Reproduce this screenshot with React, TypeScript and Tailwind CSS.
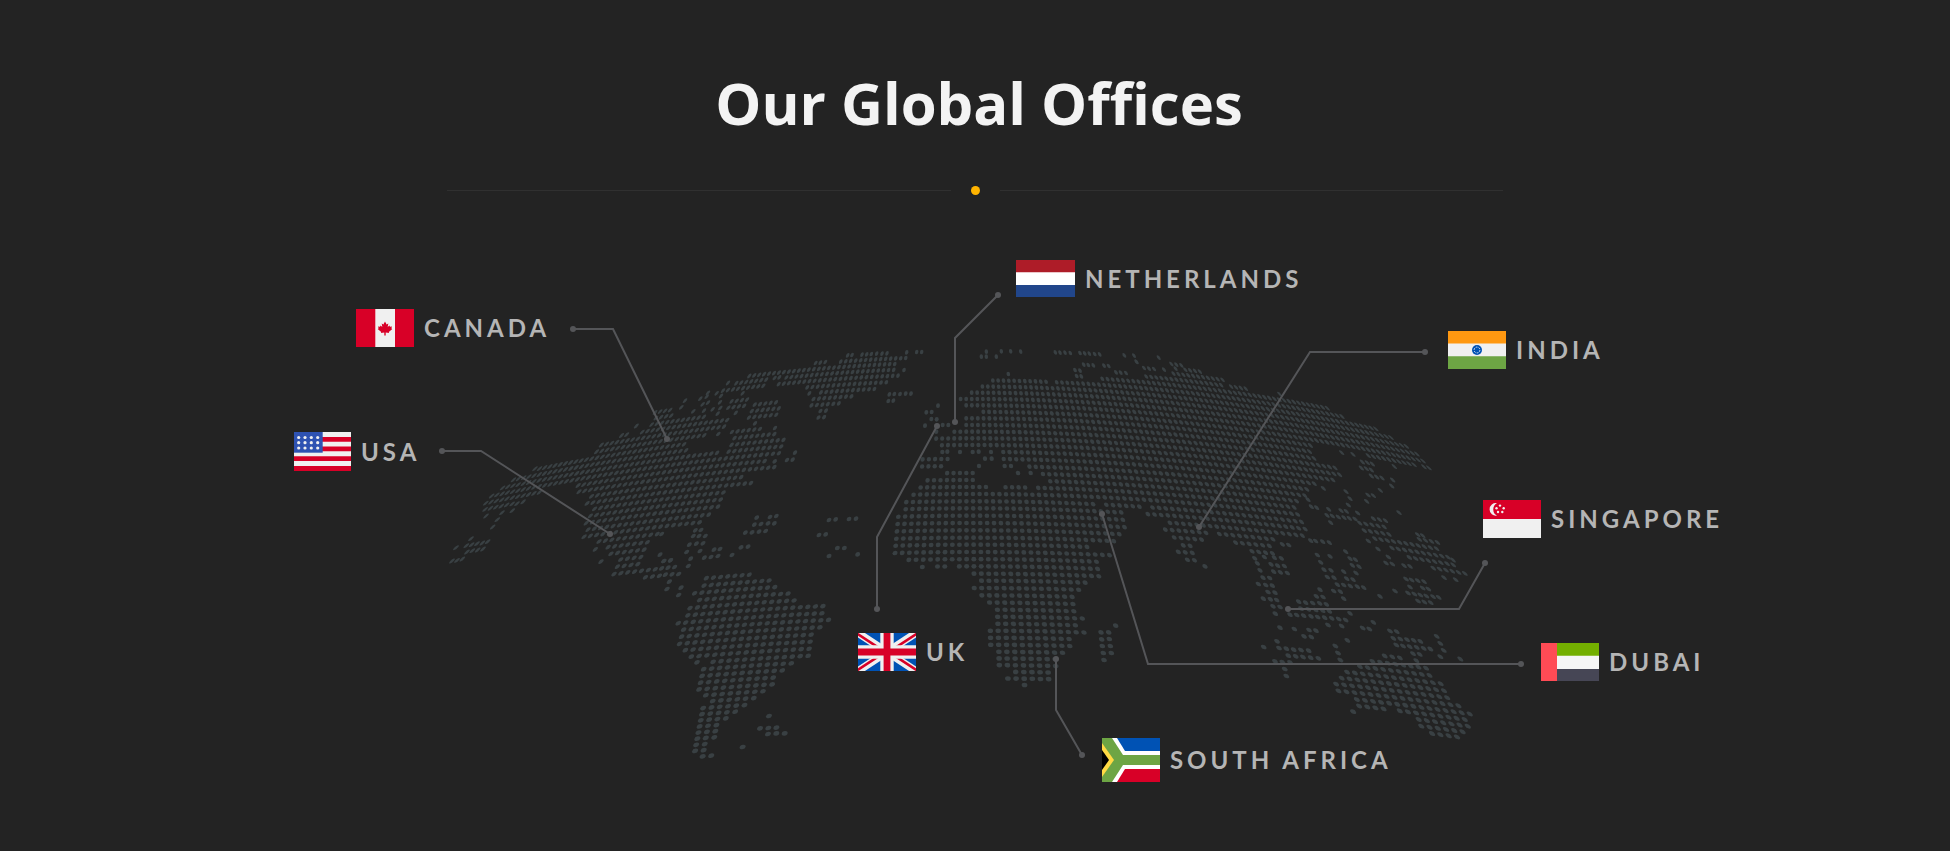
import React from "react";

type Region = { origin: [number, number]; outlines: number[][]; islands: number[] };

// Land outlines and single dots, in thirds of a map unit from each region's origin.
const REGIONS: Region[] = [
  {
    // Alaska, western Canada, Mexico
    origin: [430, 340],
    outlines: [
      [155, 490, 190, 458, 222, 432, 280, 404, 340, 372, 490, 346, 498, 328, 530, 300, 570, 300, 574, 276, 600, 276, 612, 288, 640, 264, 662, 262, 664, 240, 685, 203, 712, 200, 730, 215, 715, 250, 730, 300, 730, 560, 700, 565, 710, 585, 655, 605, 640, 650, 628, 685, 740, 672, 750, 707, 640, 716, 640, 700, 545, 707, 555, 685, 560, 665, 565, 645, 545, 650, 528, 630, 530, 612, 505, 612, 500, 600, 458, 597, 468, 572, 443, 558, 475, 535, 490, 510, 463, 494, 480, 472, 437, 462, 433, 428, 370, 440, 320, 468, 260, 497, 160, 514],
    ],
    islands: [315, 386, 123, 596, 109, 617, 125, 614, 141, 611, 157, 609, 173, 605, 111, 636, 127, 632, 143, 630, 159, 627, 78, 623, 66, 663, 81, 661, 97, 657, 168, 528, 188, 561, 202, 539, 216, 518, 247, 512, 261, 491, 619, 258, 765, 182, 754, 202, 690, 644, 702, 663, 722, 661, 513, 665, 496, 628],
  },
  {
    // Eastern Canada, USA, Greenland, South America
    origin: [660, 340],
    outlines: [
      [-25, 205, 10, 200, 45, 240, 70, 232, 215, 228, 212, 250, 200, 268, 135, 280, 130, 294, 90, 300, 85, 318, 78, 336, 20, 350, 100, 340, 172, 334, 180, 356, 200, 368, 300, 358, 345, 374, 345, 390, 275, 400, 245, 418, 275, 425, 270, 438, 195, 448, 190, 480, 175, 510, 145, 532, 118, 556, 5, 575, -30, 560],
      [215, 272, 280, 262, 340, 270, 350, 275, 372, 296, 355, 345, 340, 352, 300, 372, 200, 384, 195, 352, 205, 312],
      [255, 237, 270, 192, 350, 180, 358, 205, 350, 228, 300, 236],
      [225, 124, 285, 98, 385, 86, 390, 98, 345, 108, 310, 140, 240, 152, 140, 160, 145, 148],
      [202, 182, 270, 168, 275, 180, 245, 205, 230, 225, 215, 222, 240, 200, 195, 205],
      [345, 134, 375, 108, 410, 86, 535, 66, 545, 56, 735, 48, 742, 58, 712, 68, 700, 82, 715, 102, 690, 112, 682, 132, 645, 148, 575, 172, 540, 190, 515, 210, 492, 236, 465, 240, 475, 215, 445, 200, 455, 172, 475, 158, 438, 148, 430, 136, 395, 128, 350, 136],
      [125, 708, 270, 700, 325, 715, 345, 740, 385, 755, 405, 785, 490, 790, 492, 820, 510, 838, 480, 868, 455, 882, 450, 950, 400, 965, 370, 995, 345, 1010, 340, 1040, 290, 1080, 235, 1120, 190, 1140, 185, 1195, 150, 1215, 155, 1250, 115, 1252, 92, 1235, 100, 1160, 108, 1095, 135, 1085, 130, 1060, 112, 1048, 125, 985, 150, 975, 155, 965, 88, 950, 50, 915, 65, 870, 45, 850, 75, 820, 90, 800, 110, 770, 90, 765, 125, 745],
    ],
    islands: [121, 176, 128, 193, 144, 188, 140, 170, 170, 160, 183, 168, 180, 187, 181, 204, 173, 221, 132, 212, 158, 208, 100, 214, 204, 129, 248, 160, 175, 282, 345, 264, 285, 250, 405, 338, 381, 360, 398, 359, 344, 364, 344, 114, 358, 112, 467, 69, 481, 68, 496, 66, 563, 46, 576, 45, 606, 44, 620, 43, 634, 42, 650, 41, 666, 41, 681, 40, 740, 37, 770, 36, 785, 36, 732, 90, 714, 107, 448, 160, 688, 163, 703, 162, 720, 162, 737, 161, 753, 161, 685, 183, 700, 182, 290, 533, 330, 531, 349, 528, 283, 554, 303, 552, 324, 550, 343, 550, 256, 578, 276, 577, 297, 575, 317, 573, 243, 622, 264, 620, 216, 645, 507, 540, 527, 538, 567, 537, 588, 536, 477, 585, 497, 583, 532, 624, 553, 624, 507, 648, 593, 643, 162, 629, 180, 627, 133, 653, 153, 651, 174, 648, 120, 633, 80, 636, 92, 656, 85, 678, 11, 663, 31, 661, 5, 685, 24, 683, 44, 681, 16, 704, 36, 703, 56, 702, 28, 725, 21, 747, 63, 743, 56, 765, 106, 571, 123, 570, 100, 588, 117, 588, 136, 588, 88, 614, 109, 611, 129, 610, 5, 582, 111, 967, 327, 1128, 300, 1165, 325, 1164, 349, 1163, 324, 1182, 349, 1180, 374, 1180, 248, 1221],
  },
  {
    // Europe, Africa, Arabia
    origin: [880, 340],
    outlines: [
      [195, 392, 285, 390, 285, 432, 325, 434, 330, 452, 370, 450, 372, 432, 443, 434, 445, 452, 468, 450, 470, 432, 520, 432, 630, 460, 650, 490, 665, 505, 715, 505, 742, 535, 745, 560, 730, 585, 700, 605, 640, 600, 635, 625, 700, 640, 700, 650, 665, 655, 668, 710, 630, 730, 605, 755, 590, 770, 590, 800, 595, 820, 618, 830, 600, 850, 622, 870, 620, 885, 580, 885, 580, 925, 560, 940, 540, 960, 535, 985, 515, 995, 515, 1025, 440, 1025, 440, 1040, 428, 1040, 425, 1025, 378, 1025, 380, 1005, 400, 1000, 398, 985, 352, 985, 350, 928, 325, 925, 325, 865, 348, 860, 345, 815, 340, 795, 322, 790, 300, 770, 275, 745, 295, 730, 270, 705, 250, 685, 205, 665, 200, 688, 165, 688, 160, 668, 75, 668, 75, 650, 35, 648, 35, 620, 42, 540, 45, 520, 70, 500, 90, 470, 115, 435, 135, 415, 190, 412],
      [120, 350, 210, 350, 207, 365, 190, 387, 115, 387],
      [232, 170, 268, 168, 270, 150, 302, 150, 303, 132, 335, 130, 336, 113, 505, 113, 505, 128, 525, 128, 525, 115, 600, 118, 700, 125, 695, 108, 745, 112, 780, 115, 780, 502, 695, 500, 690, 480, 650, 475, 645, 460, 505, 428, 505, 410, 485, 405, 480, 392, 445, 388, 445, 368, 400, 368, 365, 366, 365, 325, 180, 322, 180, 303, 160, 303, 160, 288, 215, 287, 215, 265, 250, 262, 250, 228, 302, 226, 300, 203, 250, 203, 250, 185, 235, 185],
    ],
    islands: [127, 681, 187, 336, 202, 335, 240, 336, 278, 336, 296, 335, 333, 336, 315, 356, 335, 356, 297, 378, 374, 378, 393, 378, 414, 399, 452, 399, 135, 257, 170, 238, 154, 237, 139, 217, 155, 216, 174, 197, 188, 255, 205, 255, 385, 102, 319, 35, 304, 50, 319, 50, 349, 50, 364, 34, 392, 34, 422, 35, 169, 275, 526, 37, 540, 38, 555, 38, 571, 39, 600, 39, 614, 40, 628, 41, 644, 42, 659, 43, 733, 46, 762, 47, 769, 65, 611, 74, 625, 75, 640, 76, 672, 77, 686, 78, 585, 90, 600, 92, 590, 108, 604, 109, 708, 97, 722, 98, 738, 99, 707, 857, 663, 877, 686, 877, 665, 898, 688, 897, 667, 918, 691, 918, 670, 939, 694, 939, 672, 960],
  },
  {
    // Asia, Oceania
    origin: [1120, 340],
    outlines: [
      [-60, 105, 20, 112, 75, 110, 75, 96, 158, 100, 158, 84, 240, 92, 245, 104, 312, 118, 318, 138, 385, 144, 390, 162, 470, 172, 468, 152, 485, 158, 495, 176, 590, 190, 600, 205, 618, 196, 625, 205, 670, 220, 680, 236, 755, 252, 775, 275, 790, 292, 810, 282, 818, 295, 850, 312, 890, 335, 905, 358, 938, 388, 925, 390, 900, 375, 880, 382, 850, 372, 830, 388, 815, 387, 800, 365, 745, 355, 735, 328, 700, 322, 660, 318, 580, 310, 575, 325, 565, 350, 635, 368, 650, 390, 675, 414, 620, 435, 560, 430, 578, 462, 520, 475, 545, 495, 530, 510, 545, 535, 568, 584, 520, 602, 460, 592, 465, 640, 400, 656, 395, 632, 345, 628, 338, 585, 295, 583, 295, 565, 268, 560, 268, 578, 255, 600, 222, 600, 228, 630, 235, 662, 200, 662, 200, 645, 172, 638, 172, 625, 188, 620, 186, 596, 160, 594, 158, 572, 132, 570, 128, 525, 78, 524, 78, 500, -60, 500],
      [740, 516, 805, 526, 805, 555, 825, 590, 840, 608, 885, 612, 885, 596, 960, 606, 962, 640, 985, 650, 1020, 680, 1050, 708, 935, 692, 930, 678, 870, 662, 850, 645, 808, 638, 800, 620, 775, 612, 755, 592, 728, 588, 722, 565, 712, 550, 708, 530, 745, 535],
      [740, 965, 778, 960, 778, 944, 852, 952, 860, 968, 898, 978, 925, 985, 935, 1005, 950, 1022, 985, 1030, 975, 1050, 985, 1075, 1010, 1085, 1015, 1068, 1028, 1088, 1045, 1110, 1060, 1150, 1045, 1180, 1030, 1197, 925, 1185, 890, 1160, 885, 1130, 835, 1120, 830, 1105, 800, 1100, 800, 1118, 720, 1108, 712, 1128, 700, 1118, 690, 1075, 660, 1065, 632, 1038, 660, 1010, 670, 995, 705, 990, 705, 978, 745, 975],
    ],
    islands: [50, 66, 116, 53, 154, 72, 169, 74, 184, 76, 72, 84, 87, 86, 102, 87, 132, 89, 412, 670, 453, 673, 473, 677, 493, 678, 484, 655, 463, 653, 433, 651, 420, 691, 461, 695, 481, 697, 502, 699, 429, 713, 449, 714, 415, 732, 437, 735, 457, 737, 444, 756, 465, 758, 430, 776, 451, 778, 470, 780, 459, 799, 480, 801, 466, 821, 487, 613, 506, 615, 255, 679, 678, 455, 690, 476, 685, 495, 663, 512, 679, 514, 713, 519, 626, 508, 574, 500, 590, 503, 621, 526, 637, 528, 632, 548, 655, 531, 672, 533, 688, 535, 705, 537, 564, 479, 610, 445, 665, 338, 699, 343, 727, 366, 742, 368, 757, 372, 724, 384, 739, 386, 754, 390, 754, 408, 770, 411, 786, 414, 818, 420, 815, 438, 781, 451, 744, 465, 760, 467, 740, 484, 837, 518, 745, 603, 774, 627, 893, 584, 908, 587, 999, 660, 805, 651, 798, 669, 817, 672, 852, 677, 870, 679, 972, 713, 1007, 719, 572, 602, 587, 603, 608, 605, 628, 608, 592, 645, 602, 667, 630, 649, 677, 635, 612, 689, 622, 711, 633, 691, 642, 713, 690, 656, 706, 659, 697, 676, 717, 680, 671, 695, 708, 699, 680, 716, 699, 719, 652, 734, 671, 735, 691, 738, 712, 740, 731, 743, 641, 753, 661, 755, 671, 776, 600, 749, 589, 769, 609, 771, 536, 785, 557, 788, 578, 789, 599, 790, 619, 793, 543, 806, 565, 808, 587, 810, 608, 812, 628, 814, 510, 824, 530, 825, 551, 827, 573, 829, 593, 831, 614, 833, 635, 835, 656, 837, 677, 840, 690, 820, 624, 855, 665, 858, 480, 863, 523, 867, 567, 870, 588, 872, 552, 889, 574, 891, 728, 864, 748, 867, 760, 847, 780, 769, 825, 753, 858, 717, 875, 720, 893, 722, 912, 725, 870, 741, 908, 744, 925, 747, 864, 759, 883, 762, 901, 765, 919, 768, 939, 770, 956, 772, 894, 783, 913, 786, 932, 788, 471, 904, 431, 921, 477, 924, 499, 926, 521, 929, 543, 930, 566, 932, 505, 947, 527, 949, 549, 951, 572, 953, 595, 955, 465, 964, 487, 966, 510, 967, 494, 987, 499, 1008, 682, 901, 646, 918, 654, 939, 661, 960, 810, 873, 830, 875, 820, 895, 841, 897, 861, 899, 881, 901, 901, 904, 829, 915, 849, 918, 869, 920, 890, 922, 911, 925, 931, 927, 879, 941, 899, 943, 950, 889, 961, 910, 971, 931, 961, 950, 1021, 957, 889, 962],
  },
];

// Height of each parallel on the central meridian.
const PARALLELS = [
  35, 50.5, 67, 84.5, 102.5, 121, 139.5, 158, 177, 196, 215.5, 235, 255, 275, 295, 315, 335.5, 356.5, 378, 399, 420, 441, 462, 484, 505, 527, 549, 571, 593, 614, 636, 657.5, 679, 701, 722, 744, 766, 787.5, 809, 830, 851, 872, 893, 914, 935, 955, 975, 995, 1015, 1034, 1053, 1072, 1090, 1108, 1126, 1144, 1162, 1180, 1198, 1216, 1234,
].map((z) => 340 + z / 3);

const spacing = (v: number) => 5.33 + 0.0123 * (v - 380) - 0.0000097 * (v - 380) ** 2;
const bend = (v: number) => 0.00029 + 0.00025 * ((700 - v) / 328) ** 2;

function project(c: number, v: number): [number, number] {
  const w = c * spacing(v);
  const u = w * (1 - (700 - v) * 7.5e-10 * w * w);
  return [971.5 + (v - 380) * 0.013 + u, v + (bend(v) * u * u) / 2];
}

function unproject(x: number, y: number): [number, number] {
  let c = (x - 973) / 6;
  let v = y;
  for (let i = 0; i < 12; i++) {
    const [px, py] = project(c, v);
    v += y - py;
    c += (x - px) / spacing(v);
  }
  return [c, v];
}

function inside(x: number, y: number, p: number[]) {
  let hit = false;
  for (let i = 0, j = p.length - 2; i < p.length; j = i, i += 2) {
    if (p[i + 1] > y !== p[j + 1] > y && x < ((p[j] - p[i]) * (y - p[i + 1])) / (p[j + 1] - p[i + 1]) + p[i]) hit = !hit;
  }
  return hit;
}

// An oval following the local slant of the grid.
function oval(x: number, y: number, c: number, v: number) {
  const [ax, ay] = project(c + 0.5, v);
  const [bx, by] = project(c - 0.5, v);
  const [dx, dy] = project(c, v + 3.3);
  const [ex, ey] = project(c, v - 3.3);
  const k = 0.35;
  const m = [(ax - bx) * k, (ay - by) * k, (dx - ex) * k, (dy - ey) * k, x, y];
  return `matrix(${m.map((n) => n.toFixed(2)).join(" ")})`;
}

function buildDots() {
  const single: [number, number][] = [];
  for (const r of REGIONS)
    for (let i = 0; i < r.islands.length; i += 2)
      single.push([r.origin[0] + r.islands[i] / 3, r.origin[1] + r.islands[i + 1] / 3]);
  const dots = single.map(([x, y]) => {
    const [c, v] = unproject(x, y);
    return oval(x, y, c, v);
  });
  for (const v of PARALLELS)
    for (let c = -110; c <= 110; c++) {
      const [x, y] = project(c, v);
      if (x < 430 || x > 1490) continue;
      const land = REGIONS.some((r) => r.outlines.some((o) => inside((x - r.origin[0]) * 3, (y - r.origin[1]) * 3, o)));
      if (land && !single.some(([sx, sy]) => Math.hypot(sx - x, sy - y) < 4)) dots.push(oval(x, y, c, v));
    }
  return dots;
}

const DOTS = buildDots();

const ROUTES: [number, number][][] = [
  [[573, 329], [613, 329], [667, 439]],
  [[442, 451], [481, 451], [610, 534]],
  [[998, 295], [955, 338], [955, 422]],
  [[937, 426], [877, 537], [877, 609]],
  [[1102, 514], [1148, 664], [1521, 664]],
  [[1056, 659], [1056, 710], [1082, 755]],
  [[1199, 527], [1310, 352], [1425, 352]],
  [[1288, 609], [1459, 609], [1485, 563]],
];

function WorldMap() {
  return (
    <svg viewBox="0 250 1950 601" className="block w-full" aria-hidden="true">
      <g fill="#394043">
        {DOTS.map((m, i) => (
          <circle key={i} r="1" transform={m} />
        ))}
      </g>
      <g fill="none" stroke="#545558" strokeWidth="2">
        {ROUTES.map((r, i) => (
          <polyline key={i} points={r.join(" ")} />
        ))}
      </g>
      <g fill="#545558">
        {ROUTES.map((r, i) => (
          <React.Fragment key={i}>
            <circle cx={r[0][0]} cy={r[0][1]} r="3" />
            <circle cx={r[2][0]} cy={r[2][1]} r="3" />
          </React.Fragment>
        ))}
      </g>
    </svg>
  );
}

const Canada = (
  <svg viewBox="0 0 58 38" className="h-[38px] w-[58px]">
    <path fill="#f0f0f0" d="M0 0h58v38H0z" />
    <path fill="#d80027" d="M0 0h19.3v38H0zM39 0h19v38H39zM29 12.6l1.6 2.8 1.7-.8-.6 3.4 1.7-1.5.6 1.2 2.1-.3-.8 1.9 1 .6-3.5 3 .3 1-3.4-.4V26.500h-1.400v-3l-3.400.4.3-1-3.500-3 1-.6-.8-1.900 2.100.3.6-1.200 1.700 1.500-.6-3.400 1.700.8z" />
  </svg>
);

const Usa = (
  <svg viewBox="0 0 57 39" className="h-[39px] w-[57px]">
    <path fill="#f0f0f0" d="M0 0h57v39H0z" />
    <path fill="#d80027" d="M28 5h29v4.700H28zM28 14.600h29v4.700H28zM0 24.300h57V29H0zM0 34h57v5H0z" />
    <path fill="#2e52b2" d="M0 0h28.700v20.700H0z" />
    <g fill="#f0f0f0">
      {[5.500, 10.700, 16].map((y) => [4.700, 11, 17.300, 23.700].map((x) => <circle key={`${x}-${y}`} cx={x} cy={y} r="1.600" />))}
    </g>
  </svg>
);

const Netherlands = (
  <svg viewBox="0 0 59 37" className="h-[37px] w-[59px]">
    <path fill="#fff" d="M0 0h59v37H0z" />
    <path fill="#ae1c28" d="M0 0h59v12.300H0z" />
    <path fill="#21468b" d="M0 25h59v12H0z" />
  </svg>
);

const India = (
  <svg viewBox="0 0 58 38" className="h-[38px] w-[58px]">
    <path fill="#f0f0f0" d="M0 0h58v38H0z" />
    <path fill="#ff9811" d="M0 0h58v12.500H0z" />
    <path fill="#6da544" d="M0 25.300h58V38H0z" />
    <circle cx="29" cy="19" r="5" fill="#0052b4" />
    <circle cx="29" cy="19" r="2.900" fill="none" stroke="#d5e0f0" strokeWidth="1" strokeDasharray="1.800 1.200" />
  </svg>
);

const Singapore = (
  <svg viewBox="0 0 58 38" className="h-[38px] w-[58px]">
    <path fill="#f0f0f0" d="M0 0h58v38H0z" />
    <path fill="#d80027" d="M0 0h58v19H0z" />
    <path fill="#f0f0f0" d="M14 3.200a6.300 6.300 0 1 0 0 12.400 7 7 0 0 1 0-12.400z" />
    <g fill="#f0f0f0">
      <circle cx="17" cy="5.600" r="1.200" />
      <circle cx="13.500" cy="8.300" r="1.200" />
      <circle cx="20.700" cy="8.300" r="1.200" />
      <circle cx="15" cy="12" r="1.200" />
      <circle cx="19.300" cy="12" r="1.200" />
    </g>
  </svg>
);

const Uk = (
  <svg viewBox="0 0 58 38" className="h-[38px] w-[58px]">
    <path fill="#0052b4" d="M0 0h58v38H0z" />
    <path stroke="#f0f0f0" strokeWidth="7.600" d="M0 0l58 38M58 0L0 38" />
    <path stroke="#d80027" strokeWidth="2.600" d="M-1 .6l26 17M59 .6l-26 17M-1 37.400l26-17M59 37.400l-26-17" />
    <path fill="#f0f0f0" d="M22.300 0h13.400v38H22.300zM0 12.300h58v13.400H0z" />
    <path fill="#d80027" d="M25.600 0h6.800v38h-6.800zM0 15.600h58v6.800H0z" />
  </svg>
);

const SouthAfrica = (
  <svg viewBox="0 0 58 44" className="h-[44px] w-[58px]">
    <path fill="#fff" d="M0 0h58v44H0z" />
    <path fill="#0052b4" d="M15 0h43v13H23z" />
    <path fill="#d80027" d="M15 44h43V31H23z" />
    <path fill="#6da544" d="M0 0h10l11 17h37v10H21L10 44H0z" />
    <path fill="#ffda44" d="M0 5l12 17L0 39z" />
    <path fill="#000" d="M0 12l7 10-7 10z" />
  </svg>
);

const Dubai = (
  <svg viewBox="0 0 58 38" className="h-[38px] w-[58px]">
    <path fill="#f5f5f5" d="M0 0h58v38H0z" />
    <path fill="#73af00" d="M16 0h42v12.700H16z" />
    <path fill="#464655" d="M16 26h42v12H16z" />
    <path fill="#ff4b55" d="M0 0h16v38H0z" />
  </svg>
);

const OFFICES = [
  { name: "Canada", flag: Canada, place: "left-[18.26%] top-[9.8%]" },
  { name: "USA", flag: Usa, place: "left-[15.08%] top-[30.3%]" },
  { name: "Netherlands", flag: Netherlands, place: "left-[52.1%] top-[1.7%]" },
  { name: "India", flag: India, place: "left-[74.26%] top-[13.5%]" },
  { name: "Singapore", flag: Singapore, place: "left-[76.05%] top-[41.6%]" },
  { name: "UK", flag: Uk, place: "left-[44%] top-[63.7%]" },
  { name: "South Africa", flag: SouthAfrica, place: "left-[56.51%] top-[81.2%]" },
  { name: "Dubai", flag: Dubai, place: "left-[79.03%] top-[65.4%]" },
];

export default function App() {
  return (
    <section className="min-h-screen bg-[#232323]">
      <header className="flex flex-col items-center">
        <h2 className="pt-[63px] pl-2 font-['Open_Sans',sans-serif] text-[58px] leading-[80px] font-bold text-[#f3f3f3]">
          Our Global Offices
        </h2>
        <div className="mt-[43px] mb-[55px] flex w-full max-w-[1056px] items-center gap-5">
          <span className="h-px flex-1 bg-[#303030]" />
          <span className="size-[9px] rounded-full bg-[#ffb400]" />
          <span className="h-px flex-1 bg-[#303030]" />
        </div>
      </header>
      <div className="relative">
        <WorldMap />
        <ul>
          {OFFICES.map((o) => (
            <li key={o.name} className={`absolute flex items-center gap-[10px] ${o.place}`}>
              {o.flag}
              <span className="font-['Lato',sans-serif] text-2xl font-bold tracking-[4px] whitespace-nowrap text-[#b5b5b5] uppercase">
                {o.name}
              </span>
            </li>
          ))}
        </ul>
      </div>
    </section>
  );
}
